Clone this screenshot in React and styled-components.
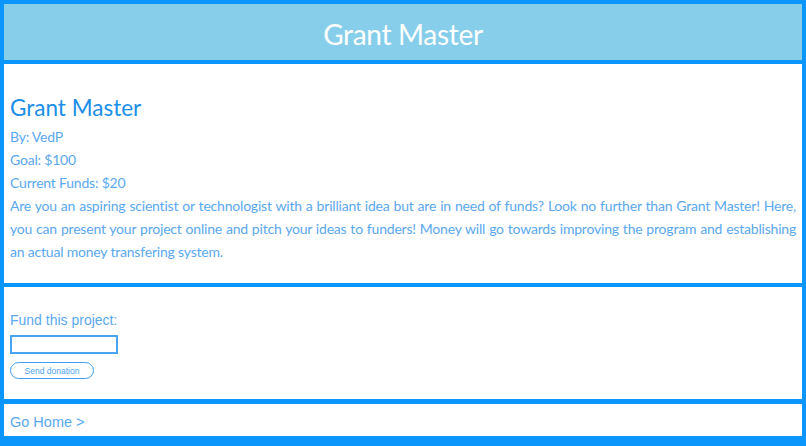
import styled, { createGlobalStyle } from "styled-components";

const GlobalStyle = createGlobalStyle`
  html, body {
    margin: 0;
    padding: 0;
    background-color: #0a96fb;
  }
`;

const Page = styled.div`
  display: flex;
  flex-direction: column;
  gap: 4px;
  padding: 4px 4px 9px;
  height: 446px;
  box-sizing: border-box;
  font-family: Lato, "Noto Sans", sans-serif;
`;

const Banner = styled.header`
  background-color: #87ceeb;
  height: 56px;
  padding-top: 3px;
  box-sizing: border-box;
  display: flex;
  align-items: center;
  justify-content: center;
  color: #fff;
  font-size: 28px;
  letter-spacing: -0.3px;
`;

const Panel = styled.section`
  background-color: #fff;
  padding: ${(p) => p.$pad || "0 6px"};
  margin-top: ${(p) => p.$top || 0}px;
  height: ${(p) => p.$h}px;
  box-sizing: border-box;
`;

const Title = styled.h2`
  margin: 0 0 3px;
  font-size: 22.5px;
  font-weight: 400;
  line-height: 28px;
  color: #1a8ee8;
`;

const Line = styled.p`
  margin: 0;
  font-size: 14px;
  letter-spacing: -0.2px;
  line-height: 23px;
  color: #5aa8f0;
`;

const Blurb = styled(Line)`
  text-align: justify;
`;

const Label = styled.label`
  display: block;
  font-family: "Liberation Sans", Arial, sans-serif;
  font-size: 14px;
  line-height: 23px;
  color: #5aa8f0;
`;

const Amount = styled.input`
  display: block;
  width: 108px;
  height: 19px;
  box-sizing: border-box;
  margin: 3px 0 8px;
  border: 2px solid #4aa3f0;
  background: #fff;
  outline: none;
`;

const SendButton = styled.button`
  display: block;
  width: 84px;
  height: 17px;
  padding: 0;
  border: 1.5px solid #3d9df0;
  border-radius: 9px;
  background: #fff;
  color: #4aa3f0;
  font-family: "Liberation Sans", Arial, sans-serif;
  font-size: 8.5px;
`;

const HomeLink = styled.a`
  font-family: "Liberation Sans", Arial, sans-serif;
  font-size: 14.5px;
  line-height: 36px;
  color: #5aa8f0;
  text-decoration: none;
`;

export default function App() {
  return (
    <>
      <GlobalStyle />
      <Page>
        <Banner>Grant Master</Banner>
        <Panel $h={219} $pad="30px 6px 0">
          <Title>Grant Master</Title>
          <Line>By: VedP</Line>
          <Line>Goal: $100</Line>
          <Line>Current Funds: $20</Line>
          <Blurb>
            Are you an aspiring scientist or technologist with a brilliant idea
            but are in need of funds? Look no further than Grant Master! Here,
            you can present your project online and pitch your ideas to
            funders! Money will go towards improving the program and
            establishing an actual money transfering system.
          </Blurb>
        </Panel>
        <Panel $h={112} $pad="22px 6px 0">
          <Label htmlFor="amount">Fund this project:</Label>
          <Amount id="amount" type="text" />
          <SendButton>Send donation</SendButton>
        </Panel>
        <Panel $h={32} $top={1}>
          <HomeLink href="#">Go Home &gt;</HomeLink>
        </Panel>
      </Page>
    </>
  );
}
